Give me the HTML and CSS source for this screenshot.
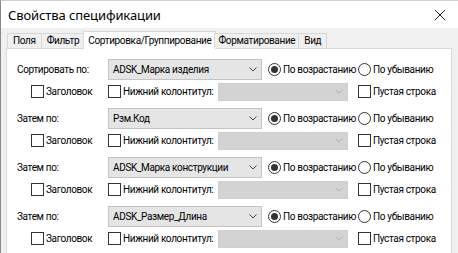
FILE: index.html
```html
<!DOCTYPE html>
<html lang="ru">
<head>
<meta charset="utf-8">
<link rel="stylesheet" href="styles.css">
</head>
<body>
<div class="window">
  <div class="titlebar">
    <span class="title">Свойства спецификации</span>
    <svg class="close" width="12" height="12" viewBox="0 0 12 12"><path d="M1 1 L11 11 M11 1 L1 11" stroke="#222" stroke-width="1"/></svg>
  </div>
  <div class="body">
    <div class="tabs">
      <div class="tab">Поля</div>
      <div class="tab">Фильтр</div>
      <div class="tab active">Сортировка/Группирование</div>
      <div class="tab">Форматирование</div>
      <div class="tab">Вид</div>
    </div>
    <div class="panel">
      <div class="group">
        <span class="label">Сортировать по:</span>
        <div class="combo"><span>ADSK_Марка изделия</span><svg class="chev" width="8" height="5" viewBox="0 0 8 5"><path d="M0.5 0.5 L4 4 L7.5 0.5" fill="none" stroke="#444"/></svg></div>
        <label class="opt radio1"><span class="radio on"></span>По возрастанию</label>
        <label class="opt"><span class="radio"></span>По убыванию</label>
        <label class="opt indent"><span class="check"></span>Заголовок</label>
        <label class="opt"><span class="check"></span>Нижний колонтитул:</label>
        <div class="combo disabled"><svg class="chev" width="8" height="5" viewBox="0 0 8 5"><path d="M0.5 0.5 L4 4 L7.5 0.5" fill="none" stroke="#b0b0b0"/></svg></div>
        <label class="opt"><span class="check"></span>Пустая строка</label>
      </div>
      <div class="group">
        <span class="label">Затем по:</span>
        <div class="combo"><span>Рзм.Код</span><svg class="chev" width="8" height="5" viewBox="0 0 8 5"><path d="M0.5 0.5 L4 4 L7.5 0.5" fill="none" stroke="#444"/></svg></div>
        <label class="opt radio1"><span class="radio on"></span>По возрастанию</label>
        <label class="opt"><span class="radio"></span>По убыванию</label>
        <label class="opt indent"><span class="check"></span>Заголовок</label>
        <label class="opt"><span class="check"></span>Нижний колонтитул:</label>
        <div class="combo disabled"><svg class="chev" width="8" height="5" viewBox="0 0 8 5"><path d="M0.5 0.5 L4 4 L7.5 0.5" fill="none" stroke="#b0b0b0"/></svg></div>
        <label class="opt"><span class="check"></span>Пустая строка</label>
      </div>
      <div class="group">
        <span class="label">Затем по:</span>
        <div class="combo"><span>ADSK_Марка конструкции</span><svg class="chev" width="8" height="5" viewBox="0 0 8 5"><path d="M0.5 0.5 L4 4 L7.5 0.5" fill="none" stroke="#444"/></svg></div>
        <label class="opt radio1"><span class="radio on"></span>По возрастанию</label>
        <label class="opt"><span class="radio"></span>По убыванию</label>
        <label class="opt indent"><span class="check"></span>Заголовок</label>
        <label class="opt"><span class="check"></span>Нижний колонтитул:</label>
        <div class="combo disabled"><svg class="chev" width="8" height="5" viewBox="0 0 8 5"><path d="M0.5 0.5 L4 4 L7.5 0.5" fill="none" stroke="#b0b0b0"/></svg></div>
        <label class="opt"><span class="check"></span>Пустая строка</label>
      </div>
      <div class="group">
        <span class="label">Затем по:</span>
        <div class="combo"><span>ADSK_Размер_Длина</span><svg class="chev" width="8" height="5" viewBox="0 0 8 5"><path d="M0.5 0.5 L4 4 L7.5 0.5" fill="none" stroke="#444"/></svg></div>
        <label class="opt radio1"><span class="radio on"></span>По возрастанию</label>
        <label class="opt"><span class="radio"></span>По убыванию</label>
        <label class="opt indent"><span class="check"></span>Заголовок</label>
        <label class="opt"><span class="check"></span>Нижний колонтитул:</label>
        <div class="combo disabled"><svg class="chev" width="8" height="5" viewBox="0 0 8 5"><path d="M0.5 0.5 L4 4 L7.5 0.5" fill="none" stroke="#b0b0b0"/></svg></div>
        <label class="opt"><span class="check"></span>Пустая строка</label>
      </div>
    </div>
  </div>
</div>
</body>
</html>
```
FILE: styles.css
```css
html, body {
  margin: 0;
  padding: 0;
  width: 458px;
  height: 253px;
  overflow: hidden;
  background: #ffffff;
  font-family: Roboto, "Noto Sans", sans-serif;
  color: #000;
}
.window {
  width: 458px;
  height: 253px;
  box-sizing: border-box;
  border-left: 1px solid #888;
  border-top: 1px solid #cfcfcf;
  display: flex;
  flex-direction: column;
}
.titlebar {
  height: 27px;
  flex: none;
  background: #fff;
  display: flex;
  align-items: center;
  justify-content: space-between;
  padding: 0 12px 0 7px;
}
.title {
  font-family: "Noto Sans", sans-serif;
  font-size: 13px;
  letter-spacing: -0.1px;
}
.close { display: block; }
.body {
  flex: 1;
  background: #f0f0f0;
  padding: 3px 6px 0 5px;
  display: flex;
  flex-direction: column;
}
.tabs {
  display: flex;
  align-items: flex-end;
  height: 17px;
  padding-left: 2px;
  position: relative;
  z-index: 1;
}
.tab {
  height: 14px;
  line-height: 14px;
  padding: 0 5px;
  border: 1px solid #d9d9d9;
  border-bottom: none;
  margin-left: -1px;
  font-size: 10px;
  letter-spacing: -0.35px;
  background: #f0f0f0;
}
.tab.active {
  height: 17px;
  line-height: 17px;
  background: #fff;
  margin: 0 -2px -1px -2px;
  padding: 0 4px;
}
.tab.active + .tab { margin-left: 0; padding: 0 3px; }
.panel {
  flex: 1;
  background: #fff;
  border: 1px solid #d9d9d9;
  border-bottom: none;
  padding: 10px 0 0 10px;
  display: flex;
  flex-direction: column;
  gap: 6px;
  font-size: 10px;
  letter-spacing: -0.35px;
}
.group {
  display: grid;
  grid-template-columns: 91px 110px 44px 96px 1fr;
  grid-template-rows: 21px 21px;
  row-gap: 1px;
  align-items: center;
}
.label { grid-column: 1; }
.combo {
  grid-column: 2 / 4;
  height: 21px;
  box-sizing: border-box;
  background: #e5e5e5;
  border: 1px solid #c4c4c4;
  display: flex;
  align-items: center;
  justify-content: space-between;
  padding: 0 4px 0 4px;
}
.combo.disabled {
  grid-column: 3 / 5;
  width: 130px;
  height: 18px;
  background: #d3d3d3;
  border-color: #cfcfcf;
  justify-content: flex-end;
}
.chev { display: block; }
.opt {
  display: flex;
  align-items: center;
  gap: 2px;
  white-space: nowrap;
}
.radio1 { padding-left: 6px; }
.indent { padding-left: 14px; }
.check {
  width: 13px;
  height: 13px;
  box-sizing: border-box;
  border: 1px solid #333;
  background: #fff;
  flex: none;
}
.radio {
  width: 13px;
  height: 13px;
  box-sizing: border-box;
  border: 1px solid #333;
  border-radius: 50%;
  background: #fff;
  flex: none;
  position: relative;
}
.radio.on::after {
  content: "";
  position: absolute;
  left: 2px;
  top: 2px;
  width: 7px;
  height: 7px;
  border-radius: 50%;
  background: #333;
}
```
